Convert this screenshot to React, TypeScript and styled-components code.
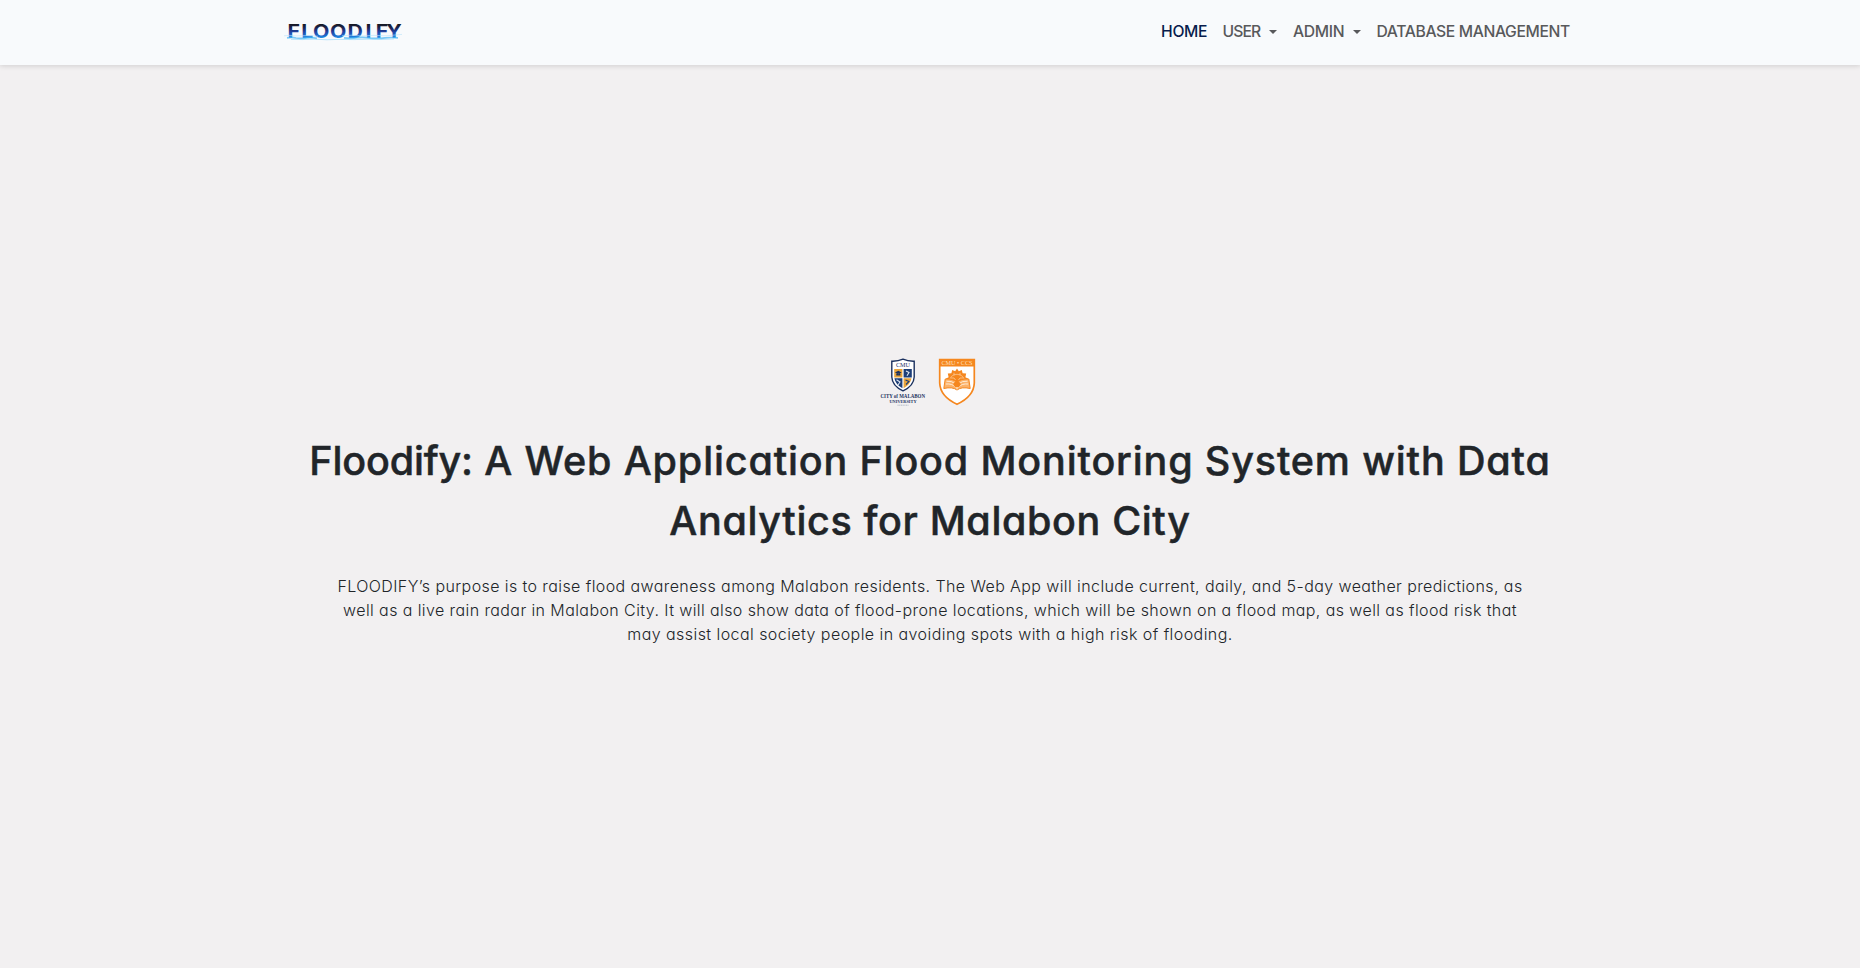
import React from "react";
import styled, { createGlobalStyle } from "styled-components";

const GlobalStyle = createGlobalStyle`
  *, *::before, *::after { box-sizing: border-box; }
  body {
    margin: 0;
    background: #f2f0f1;
    color: #212529;
    font-family: Inter, "Open Sans", sans-serif;
    font-feature-settings: "cv11";
  }
`;

const Page = styled.div`
  min-height: 100vh;
  display: flex;
  flex-direction: column;
`;

const Navbar = styled.header`
  height: 65px;
  background: #f8fafc;
  box-shadow: 0 1px 5px rgba(0, 0, 0, 0.14);
`;

const Container = styled.div`
  width: 1320px;
  height: 100%;
  margin: 0 auto;
  padding: 0 20px 0 14px;
  display: flex;
  align-items: center;
  justify-content: space-between;
`;

const Brand = styled.a`
  display: block;
  height: 24px;
  margin-bottom: 1px;
  svg { display: block; }
`;

const Nav = styled.nav`
  display: flex;
  gap: 16px;
  margin-bottom: 2px;
`;

const NavLink = styled.a<{ $width: number; $tracking: number; $active?: boolean }>`
  width: ${(p) => p.$width}px;
  display: flex;
  align-items: center;
  justify-content: space-between;
  font-size: 15.7px;
  line-height: 24px;
  font-weight: 500;
  letter-spacing: ${(p) => p.$tracking}px;
  white-space: nowrap;
  color: ${(p) => (p.$active ? "#071c4d" : "#58595b")};
`;

const Caret = styled.span`
  border-top: 4.8px solid currentColor;
  border-left: 4.8px solid transparent;
  border-right: 4.8px solid transparent;
`;

const Hero = styled.main`
  padding-top: 292px;
  display: flex;
  flex-direction: column;
  align-items: center;
  text-align: center;
`;

const Logos = styled.div`
  width: 100px;
  height: 50px;
  display: flex;
  gap: 10px;
  svg { display: block; flex: none; overflow: visible; }
`;

const Title = styled.h1`
  margin: 24px 0 23px;
  font-size: 39.5px;
  line-height: 60px;
  font-weight: 500;
  -webkit-text-stroke: 0.5px currentColor;
`;

const Description = styled.p`
  margin: 0;
  font-size: 16px;
  line-height: 24px;
  font-weight: 350;
`;

const Line = styled.span<{ $tracking: number }>`
  display: block;
  white-space: nowrap;
  letter-spacing: ${(p) => p.$tracking}px;
`;

const Name = styled.span`
  letter-spacing: -0.15px;
`;

function FloodifyLogo() {
  return (
    <svg width="120" height="24" viewBox="0 0 120 24">
      <defs>
        <linearGradient id="ink" gradientUnits="userSpaceOnUse" x1="0" y1="4" x2="0" y2="19">
          <stop offset="0" stopColor="#16181f" />
          <stop offset="0.25" stopColor="#1b2450" />
          <stop offset="0.5" stopColor="#203f9c" />
          <stop offset="0.76" stopColor="#1d68c9" />
          <stop offset="1" stopColor="#22a5f2" />
        </linearGradient>
      </defs>
      <text
        transform="scale(1.16 1)"
        x="3.1 14.8 25 39.6 54.8 70.2 79 88.2"
        y="18.2"
        fontFamily="Inter, sans-serif"
        fontSize="18.3"
        fontWeight="700"
        fill="url(#ink)"
      >
        FLOODIFY
      </text>
      <path d="M0 15.8L6 15.4L12 16L22 15.6L34 16.2M58 15.8L68 15.2L78 16L90 15.4L102 15.8L118 14.4" fill="none" stroke="#b9e2fa" strokeWidth="1" opacity=".6" />
      <path d="M3 17.8Q8 17 12 18Q17 18.9 23 17.8Q28 17.2 33 18.4M60 17.8Q67 18.8 73 17.7Q80 17 86 18.2Q94 18.8 101 17.8Q107 17.2 114 17.8" fill="none" stroke="#45b4f3" strokeWidth="1.7" opacity=".7" />
      <path d="M7 19.3Q18 19.9 30 19.2Q43 20.2 56 19.4Q70 19.9 84 19.2Q96 20 110 18.9" fill="none" stroke="#8fd6fb" strokeWidth=".9" opacity=".7" />
    </svg>
  );
}

function UniversityCrest() {
  return (
    <svg width="46" height="50" viewBox="0 0 46 50">
      <path d="M23 2.2Q28 4.4 34.2 4.2V20Q33.8 29 23 33.8Q12.2 29 11.8 20V4.2Q18 4.4 23 2.2Z" fill="#fff" stroke="#1b315f" strokeWidth="1.4" />
      <path d="M14.2 12H22.4V20.4H14.2ZM23.6 21.3H31.5Q30.4 27.8 23.6 31.2Z" fill="#e8a43b" />
      <path d="M23.6 12H31.8V20.4H23.6ZM14.4 21.3H22.4V31.2Q15.6 27.8 14.4 21.3Z" fill="#1d3e78" />
      <path d="M15 15.5L18.3 13.8L21.7 15.5L18.3 17.2ZM16.3 16.8V18.6H20.4V16.8" fill="#1b315f" />
      <path d="M26 14L29 15.5L27 18.8M16.5 22.8L20 25L18 28" fill="none" stroke="#dce4ef" strokeWidth="1.1" />
      <path d="M25.5 23L29 24.4L26 27.5" fill="none" stroke="#1d3e78" strokeWidth="1.1" />
      <g fontFamily="'Liberation Serif', serif" fontWeight="700" fill="#1b315f" textAnchor="middle">
        <text x="23" y="10.4" fontSize="6.2" fontWeight="400" textLength="14">CMU</text>
        <text x="22.7" y="41.4" fontSize="5.2" textLength="44.6" lengthAdjust="spacingAndGlyphs">CITY of MALABON</text>
        <text x="23" y="46.1" fontSize="4.5" textLength="27" lengthAdjust="spacingAndGlyphs">UNIVERSITY</text>
      </g>
      <path d="M17.5 48.2H28.5" stroke="#8b97ad" strokeWidth=".6" strokeDasharray="1.2 .5" />
    </svg>
  );
}

function CollegeShield() {
  return (
    <svg width="38" height="50" viewBox="-2 0 38 50">
      <path d="M1.7 2.5H36.3V26Q35.8 39.5 19 47.2Q2.2 39.5 1.7 26Z" fill="#fff" stroke="#f5871f" strokeWidth="1.7" />
      <path d="M1 2H37V9.5H1Z" fill="#f5871f" />
      <text x="19" y="8.1" fontFamily="'Liberation Serif', serif" fontSize="6.2" fill="#ffe0bd" textAnchor="middle" textLength="31" lengthAdjust="spacingAndGlyphs">CMU • CCS</text>
      <path d="M9 26L8 21.5L10.6 20.2L9.8 16.4L13.4 16.2L14.2 13L17.2 14.2L19 11.5L20.8 14.2L23.8 13L24.6 16.2L28.2 16.4L27.4 20.2L30 21.5L29 26Z" fill="#f5871f" />
      <path d="M11.2 25Q12 17.5 19 17.3Q26 17.5 26.8 25" fill="none" stroke="#ffcf9c" strokeWidth=".7" />
      <path d="M16 18.5V15.8M22 18.5V15.8M13 21H16L17.5 23M25.5 21H22L20.5 23" fill="none" stroke="#ffe0bd" strokeWidth=".6" />
      <path d="M7.2 22L5.8 31.5Q14.5 29.5 19 33Q23.5 29.5 32.2 31.5L30.8 22Q23 21.5 19 25.2Q15 21.5 7.2 22Z" fill="#fbb26a" stroke="#f5871f" strokeWidth="1" />
      <path d="M19 25V32.5M8.5 24.2Q14 23.6 17.5 27M7.8 27Q14 26.4 17.5 30M29.5 24.2Q24 23.6 20.5 27M30.2 27Q24 26.4 20.5 30" fill="none" stroke="#fff0df" strokeWidth=".9" />
      <path d="M15 27L19 23L23 27L21 30H17Z" fill="#f5871f" />
    </svg>
  );
}

export default function App() {
  return (
    <Page>
      <GlobalStyle />
      <Navbar>
        <Container>
          <Brand aria-label="Floodify"><FloodifyLogo /></Brand>
          <Nav>
            <NavLink $width={45.5} $tracking={-0.3} $active>HOME</NavLink>
            <NavLink $width={54.5} $tracking={-0.9}>USER<Caret /></NavLink>
            <NavLink $width={67.5} $tracking={-0.3}>ADMIN<Caret /></NavLink>
            <NavLink $width={193.5} $tracking={-0.38}>DATABASE MANAGEMENT</NavLink>
          </Nav>
        </Container>
      </Navbar>
      <Hero>
        <Logos>
          <UniversityCrest />
          <CollegeShield />
        </Logos>
        <Title>
          <Line $tracking={0.85}><Name>Floodify:</Name> A Web Application Flood Monitoring System with Data</Line>
          <Line $tracking={0.64}>Analytics for Malabon City</Line>
        </Title>
        <Description>
          <Line $tracking={0.41}>FLOODIFY’s purpose is to raise flood awareness among Malabon residents. The Web App will include current, daily, and 5-day weather predictions, as</Line>
          <Line $tracking={0.41}>well as a live rain radar in Malabon City. It will also show data of flood-prone locations, which will be shown on a flood map, as well as flood risk that</Line>
          <Line $tracking={0.44}>may assist local society people in avoiding spots with a high risk of flooding.</Line>
        </Description>
      </Hero>
    </Page>
  );
}
